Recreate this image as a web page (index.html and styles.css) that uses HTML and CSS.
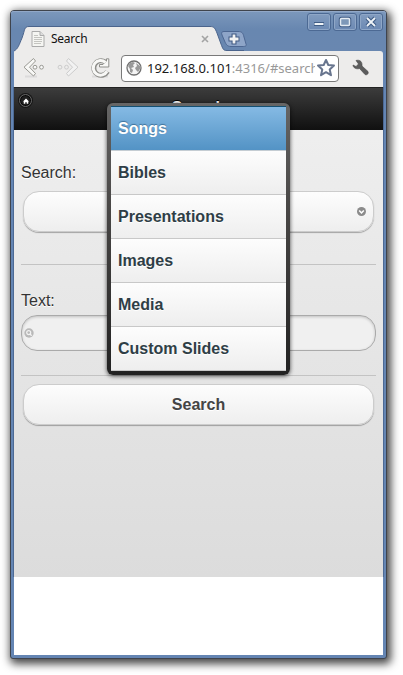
FILE: index.html
```html
<!DOCTYPE html>
<html lang="en">
<head>
<meta charset="utf-8">
<title>Search</title>
<link rel="stylesheet" href="styles.css">
</head>
<body>
<div class="window">
  <div class="titlebar">
    <svg class="tab-shape" width="230" height="41" viewBox="0 0 230 41">
      <path d="M0 41C4 39 5 35 8 28C11 20 10 16.500 15 16.500H196C200 16.500 201 18 203 23L207 34C209 39 209 40.500 213 40.500H230V41Z" fill="#edeceb"/>
      <path d="M0 41C4 39 5 35 8 28C11 20 10 16.500 15 16.500H196C200 16.500 201 18 203 23L207 34C209 39 209 40.500 213 40.500H230" fill="none" stroke="#4b648c"/>
      <path d="M210 21.500H224C228 21.500 229 23 230 27L232 34C233 36 231 36.500 229 36.500H217C213 36.500 212 34 211 32L208 25C207 22.500 208 21.500 210 21.500Z" fill="#8ea5c8" stroke="#4d6792"/>
      <path d="M220 23.500v11M214.500 29h11" stroke="#405b83" stroke-width="5"/>
      <path d="M220 24.500v9M215.500 29h9" stroke="#f2f2f2" stroke-width="2.800"/>
    </svg>
    <div class="tab">
      <svg width="14" height="16" viewBox="0 0 14 16"><path d="M1 .5H9L13 4.500V15.500H1Z" fill="#f5f5f2" stroke="#aaa"/><path d="M9 .5V4.500H13" fill="#ddd" stroke="#aaa"/><path d="M3 4.500H7M3 6.500H11M3 8.500H11M3 10.500H11M3 12.500H10" stroke="#c4c4c0"/></svg>
      <span class="tab-title">Search</span>
      <svg class="tab-close" width="8" height="8" viewBox="0 0 8 8"><path d="M1 1L7 7M7 1L1 7" stroke="#a3a3a3" stroke-width="1.600"/></svg>
    </div>
    <div class="controls">
      <span class="control"><svg width="22" height="16"><path d="M6 10H16" stroke="#405d86" stroke-width="4"/><path d="M6.500 10H15.500" stroke="#f0f4f8" stroke-width="2"/></svg></span>
      <span class="control"><svg width="22" height="16"><rect x="6.500" y="4.500" width="9" height="7" rx="1" fill="none" stroke="#405d86" stroke-width="3.500"/><rect x="6.500" y="4.500" width="9" height="7" rx="1" fill="#7e98b8" stroke="#e4ebf2" stroke-width="1.500"/></svg></span>
      <span class="control"><svg width="22" height="16"><path d="M7 4L15 12M15 4L7 12" stroke="#405d86" stroke-width="4"/><path d="M7 4L15 12M15 4L7 12" stroke="#f0f4f8" stroke-width="1.800"/></svg></span>
    </div>
  </div>
  <div class="toolbar">
    <svg class="back" width="22" height="20" viewBox="0 0 22 20"><path d="M2 18.500H14" stroke="#ccc" stroke-width="2" opacity=".5"/><path d="M10.500 .5L12.500 3L6.500 9.200L12.500 15.500L10.500 18L1 9.200Z" fill="#f8f8f6" stroke="#999993" stroke-linejoin="round"/><circle cx="12" cy="9.200" r="1.900" fill="#f8f8f8" stroke="#999993"/><circle cx="18.500" cy="9.200" r="1.900" fill="#f8f8f8" stroke="#999993"/></svg>
    <svg class="forward" width="22" height="20" viewBox="0 0 22 20"><path d="M11.500 .5L9.500 3L15.500 9.200L9.500 15.500L11.500 18L21 9.200Z" fill="#f2f2f2" stroke="#ccc" stroke-linejoin="round"/><circle cx="3" cy="9.200" r="1.900" fill="none" stroke="#ccc"/><circle cx="9.500" cy="9.200" r="1.900" fill="none" stroke="#ccc"/></svg>
    <svg class="reload" width="20" height="20" viewBox="0 0 20 20"><path d="M2 18.500H18" stroke="#ccc" stroke-width="2" opacity=".5"/><path d="M17.500 13.500A7.300 7.300 0 1 1 15 3.800" fill="none" stroke="#8f8f8b" stroke-width="5"/><path d="M18.800 .8V9H9.500V6.500H13L16.500 3V.8Z" fill="#f8f8f6" stroke="#8f8f8b" stroke-linejoin="round"/><path d="M17 13.200A7.300 7.300 0 1 1 15.500 4.500" fill="none" stroke="#f8f8f6" stroke-width="3"/></svg>
    <div class="omnibox">
      <svg width="16" height="16" viewBox="0 0 16 16"><circle cx="8" cy="8" r="7" fill="#f4f4f4" stroke="#707070" stroke-width="1.300"/><path d="M2 6L4 3L7 2L9 3L7 5L8 7L5 8L7 10L6 13L4 12L4 9ZM10 3L14 6L14 9L12 12L10 10L9 8L11 6Z" fill="#999"/></svg>
      <span class="url">192.168.0.101<span class="path">:4316/#search</span></span>
      <svg class="star" width="18" height="18" viewBox="0 0 18 18"><path d="M9 1L11.300 6L17 6.500L12.700 10.500L14 16.200L9 13.200L4 16.200L5.300 10.500L1 6.500L6.700 6Z" fill="#fff" stroke="#68758e" stroke-width="2" stroke-linejoin="round"/></svg>
    </div>
    <svg class="wrench" width="18" height="18" viewBox="0 0 18 18"><path d="M4 1.500C7 .5 10 2 10 5.500V7L16 12.500C17 14.500 15 16.500 13 15.500L7.500 9.500C4.500 10.500 1 9 1 6L4 7.500L6.500 5Z" fill="#5c5c5c" stroke="#484848" stroke-width=".6"/></svg>
  </div>
  <main class="page">
    <header class="header">
      <span class="home"><svg width="6" height="6" viewBox="0 0 8 7"><path d="M4 0L8 4H7V7H5V5H3V7H1V4H0Z" fill="#fff"/></svg></span>
      <h1>Search</h1>
    </header>
    <div class="content">
      <label class="label">Search:</label>
      <div class="button select">
        <svg width="9" height="9" viewBox="0 0 9 9"><circle cx="4.500" cy="4.500" r="4.500" fill="#8b8b8b"/><path d="M2.200 3.500L4.500 6L6.800 3.500" fill="none" stroke="#fff" stroke-width="1.500"/></svg>
      </div>
      <div class="divider first"></div>
      <label class="label">Text:</label>
      <div class="input">
        <svg width="10" height="10" viewBox="0 0 10 10"><circle cx="5" cy="5" r="4.700" fill="#b9b9b9"/><circle cx="4.700" cy="4.600" r="2" fill="none" stroke="#f3f3f3" stroke-width="1.200"/><path d="M6 6L7.700 7.700" stroke="#f3f3f3" stroke-width="1.300"/></svg>
      </div>
      <div class="divider second"></div>
      <div class="button">Search</div>
    </div>
  </main>
  <ul class="menu">
    <li class="active">Songs</li>
    <li>Bibles</li>
    <li>Presentations</li>
    <li>Images</li>
    <li>Media</li>
    <li>Custom Slides</li>
  </ul>
</div>
</body>
</html>
```
FILE: styles.css
```css
* { box-sizing: border-box; }
html, body { height: 100%; }
body {
  margin: 0;
  padding: 10px 16px 16px 10px;
  background: #fff;
  overflow: hidden;
  font-family: "Liberation Sans", Arial, sans-serif;
}
svg { display: block; flex: none; overflow: visible; }
.window {
  position: relative;
  width: 377px;
  height: 649px;
  padding: 0 3px 3px;
  border: 1px solid #3f444d;
  border-radius: 4px 4px 3px 3px;
  background: #6485b3;
  box-shadow: 2px 3px 8px 2px rgba(0, 0, 0, .72);
}
.titlebar {
  position: relative;
  display: flex;
  justify-content: space-between;
  height: 40px;
  margin: 0 -3px;
  padding: 0 3px;
  border-radius: 3px 3px 0 0;
  background: linear-gradient(#7c98bc, #6887b0 45%, #6987b0);
  box-shadow: inset 0 1px #91a8c8;
}
.tab-shape { position: absolute; left: 3px; top: -1px; }
.tab {
  position: relative;
  display: flex;
  align-items: center;
  width: 195px;
  height: 24px;
  margin-top: 16px;
  padding-left: 17px;
}
.tab-title {
  margin-left: 6px;
  color: #111;
  font: 12px/16px "Noto Sans", sans-serif;
  letter-spacing: -.25px;
}
.tab-close { margin-left: auto; }
.controls { display: flex; gap: 2px; padding-top: 2px; }
.control {
  width: 24px;
  height: 18px;
  border: 1px solid #4c6993;
  border-radius: 3px;
  background: linear-gradient(#829cbf, #6c89b3);
  box-shadow: inset 0 0 0 1px #8fa7c7;
}
.toolbar {
  display: flex;
  align-items: center;
  height: 36px;
  padding: 0 13px 2px 9px;
  border-radius: 0 3px 0 0;
  background: #edeceb;
}
.forward { margin-left: 12px; }
.reload { margin-left: 11px; }
.omnibox {
  display: flex;
  align-items: center;
  width: 219px;
  height: 27px;
  margin: 0 13px 0 11px;
  padding: 0 3px 0 4px;
  border: 1px solid #797979;
  border-radius: 4px;
  background: #fff;
}
.url {
  width: 168px;
  margin-left: 5px;
  overflow: hidden;
  color: #1a1a1a;
  font: 13px/20px "Noto Sans", sans-serif;
  letter-spacing: 0;
  white-space: nowrap;
}
.path { color: #999; }
.star { margin-left: 2px; }
.page {
  height: 490px;
  background: linear-gradient(#f0f0f0, #dcdcdc);
  box-shadow: 0 78px #fff, 1px 0 #4c6994, -1px 0 #4c6994;
}
.header {
  position: relative;
  height: 43px;
  border-top: 1px solid #222;
  border-bottom: 1px solid #111;
  background: linear-gradient(#3c3c3c, #111);
  color: #fff;
}
.header h1 {
  margin: 0;
  padding-top: 10px;
  font-size: 16px;
  line-height: 20px;
  text-align: center;
  text-shadow: 0 -1px #000;
}
.home {
  position: absolute;
  left: 5px;
  top: 6px;
  display: grid;
  place-items: center;
  width: 13px;
  height: 13px;
  border: 1px solid #666;
  border-radius: 50%;
  background: #202020;
  box-shadow: inset 0 0 0 1px #080808, 0 0 0 1px #161616;
}
.content { padding: 32px 7px 0; }
.label {
  display: block;
  height: 22px;
  color: #333;
  font-size: 16px;
  line-height: 22px;
  text-shadow: 0 1px #fff;
}
.button {
  display: flex;
  align-items: center;
  justify-content: center;
  height: 41px;
  margin: 0 2px;
  border: 1px solid #ccc;
  border-radius: 16px;
  background: linear-gradient(#fdfdfd, #eee);
  box-shadow: 0 1px 1px rgba(0, 0, 0, .3);
  color: #444;
  font-size: 16px;
  font-weight: bold;
  text-shadow: 0 1px #fff;
}
.select { justify-content: flex-end; margin-top: 7px; padding-right: 7px; }
.divider { height: 1px; background: #c3c3c3; }
.first { margin: 32px 0 25px; }
.second { margin: 24px 0 8px; }
.input {
  display: flex;
  align-items: center;
  height: 36px;
  margin-top: 3px;
  padding-left: 2px;
  border: 1px solid #aaa;
  border-radius: 16px;
  background: #f0f0f0;
  box-shadow: inset 0 1px 3px rgba(0, 0, 0, .2);
}
.menu {
  position: absolute;
  left: 96px;
  top: 92px;
  width: 183px;
  margin: 0;
  padding: 4px;
  border-radius: 6px;
  background: linear-gradient(#666, #4b4948 35%, #222);
  box-shadow: 0 1px 4px rgba(0, 0, 0, .7);
  list-style: none;
}
.menu li {
  height: 44px;
  padding-left: 7px;
  border-bottom: 1px solid #c8c8c8;
  background: linear-gradient(#fdfdfd, #eee);
  color: #2f3e46;
  font-size: 16px;
  font-weight: bold;
  line-height: 43px;
  text-shadow: 0 1px #fff;
}
.menu .active {
  border-bottom-color: #c5cdd3;
  background: linear-gradient(#85bae4, #5393c5);
  box-shadow: 0 -1px #145072;
  color: #fff;
  text-shadow: 0 -1px 1px #3e7099;
}
```
